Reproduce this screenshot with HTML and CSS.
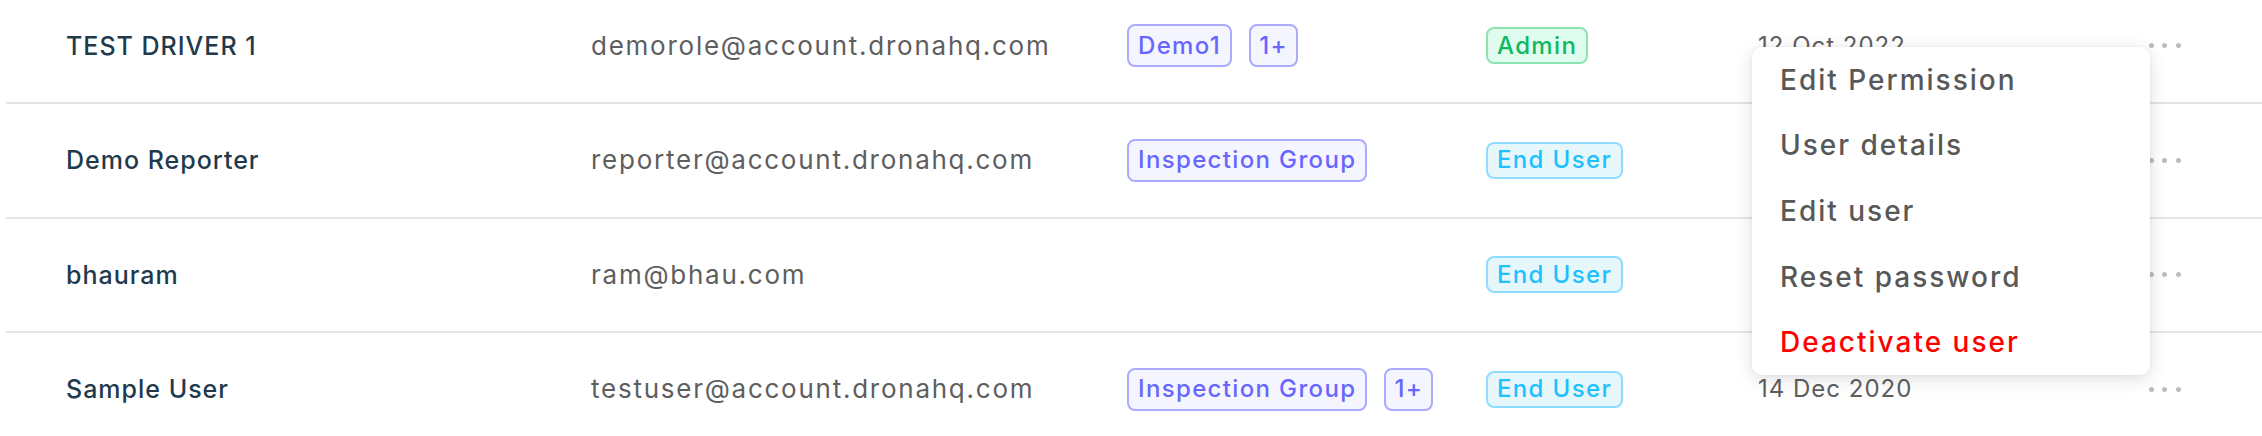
FILE: index.html
```html
<!DOCTYPE html>
<html lang="en">
<head>
<meta charset="utf-8">
<title>Users</title>
<link rel="stylesheet" href="styles.css">
</head>
<body>
<div class="page">
  <div class="table">
    <div class="row">
      <div class="cell name">TEST DRIVER 1</div>
      <div class="cell email">demorole@account.dronahq.com</div>
      <div class="cell groups"><span class="tag group">Demo1</span><span class="tag group more">1+</span></div>
      <div class="cell role"><span class="tag admin">Admin</span></div>
      <div class="cell date">12 Oct 2022</div>
      <div class="cell actions"><span class="dots"><i></i><i></i><i></i></span></div>
    </div>
    <div class="row">
      <div class="cell name">Demo Reporter</div>
      <div class="cell email">reporter@account.dronahq.com</div>
      <div class="cell groups"><span class="tag group">Inspection Group</span></div>
      <div class="cell role"><span class="tag enduser">End User</span></div>
      <div class="cell date">12 Oct 2022</div>
      <div class="cell actions"><span class="dots"><i></i><i></i><i></i></span></div>
    </div>
    <div class="row">
      <div class="cell name">bhauram</div>
      <div class="cell email">ram@bhau.com</div>
      <div class="cell groups"></div>
      <div class="cell role"><span class="tag enduser">End User</span></div>
      <div class="cell date">12 Oct 2022</div>
      <div class="cell actions"><span class="dots"><i></i><i></i><i></i></span></div>
    </div>
    <div class="row">
      <div class="cell name">Sample User</div>
      <div class="cell email">testuser@account.dronahq.com</div>
      <div class="cell groups"><span class="tag group">Inspection Group</span><span class="tag group more">1+</span></div>
      <div class="cell role"><span class="tag enduser">End User</span></div>
      <div class="cell date">14 Dec 2020</div>
      <div class="cell actions"><span class="dots"><i></i><i></i><i></i></span></div>
    </div>
  </div>

  <ul class="menu">
    <li class="menu-item">Edit Permission</li>
    <li class="menu-item">User details</li>
    <li class="menu-item">Edit user</li>
    <li class="menu-item">Reset password</li>
    <li class="menu-item danger">Deactivate user</li>
  </ul>
</div>
</body>
</html>
```

FILE: styles.css
```css
html, body {
  margin: 0;
  padding: 0;
  background: #ffffff;
}

body {
  font-family: "Inter", "Noto Sans", sans-serif;
  overflow: hidden;
  height: 436px;
}

.page {
  position: relative;
  width: 2262px;
  height: 436px;
  overflow: hidden;
}

.table {
  margin-top: -10.5px;
  margin-left: 6px;
}

.row {
  display: grid;
  grid-template-columns: 525px 536px 359px 272px 391px 1fr;
  align-items: center;
  min-height: 112.5px;
  padding-left: 60px;
  border-bottom: 2px solid #e4e4e4;
}

.cell {
  font-size: 24px;
  line-height: 30px;
  white-space: nowrap;
}

.name {
  color: #1f3a4c;
  font-size: 25px;
  font-weight: 500;
  letter-spacing: 1px;
}

.email {
  color: #5e5e5e;
  font-size: 26px;
  font-weight: 400;
  letter-spacing: 1.75px;
}

.date {
  color: #5e5e5e;
  font-weight: 400;
  letter-spacing: 1px;
}

.groups {
  display: flex;
  align-items: center;
  gap: 17px;
}

.tag {
  display: inline-flex;
  align-items: center;
  box-sizing: border-box;
  border: 2px solid;
  border-radius: 8px;
  font-size: 24px;
  font-weight: 500;
  letter-spacing: 1.35px;
  padding: 0 9px;
}

.tag.group {
  height: 43px;
  color: #6767ff;
  background: #f5f5ff;
  border-color: #aaaaff;
}

.tag.more {
  padding: 0 8px;
}

.tag.admin {
  height: 37px;
  color: #0fb862;
  background: #e0fcee;
  border-color: #8fe2b3;
}

.tag.enduser {
  height: 37px;
  color: #1ec0fd;
  background: #e6f7fc;
  border-color: #8fdcff;
}

.actions {
  display: flex;
  align-items: center;
}

.dots {
  display: flex;
  gap: 8.4px;
}

.dots i {
  display: block;
  width: 5px;
  height: 5px;
  border-radius: 50%;
  background: #bcbcbc;
}

.menu {
  position: absolute;
  left: 1752px;
  top: 47px;
  width: 398px;
  margin: 0;
  padding: 0;
  list-style: none;
  background: #ffffff;
  border-radius: 10px;
  box-shadow: 0 4px 18px rgba(0, 0, 0, 0.13), 0 0 4px rgba(0, 0, 0, 0.05);
}

.menu-item {
  display: flex;
  align-items: center;
  height: 65.6px;
  padding-left: 28px;
  font-size: 28px;
  font-weight: 500;
  letter-spacing: 2px;
  color: #585858;
}

.menu-item.danger {
  color: #ff0000;
}
```
